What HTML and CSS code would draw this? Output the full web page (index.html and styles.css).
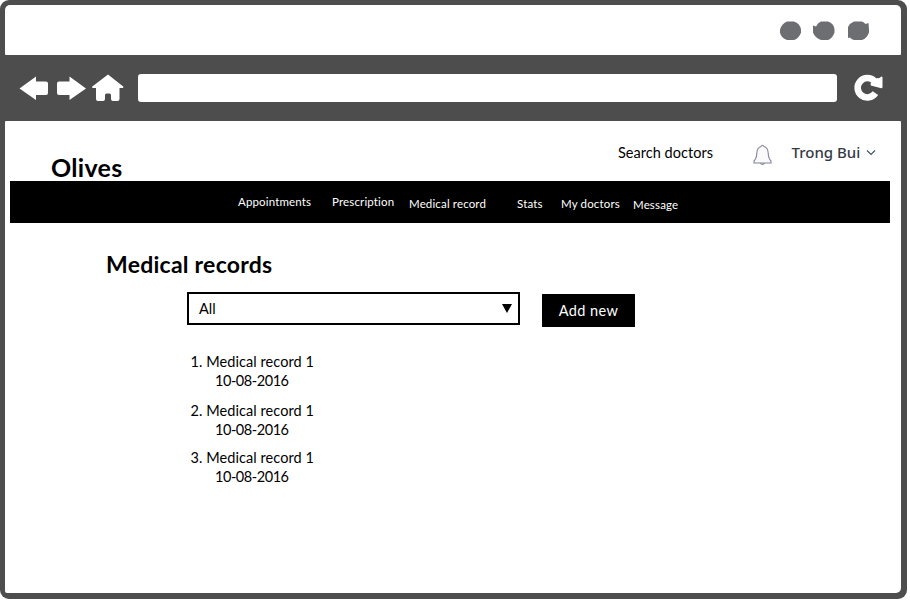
FILE: index.html
```html
<!DOCTYPE html>
<html lang="en">
<head>
<meta charset="utf-8">
<title>Olives - Medical records</title>
<link rel="stylesheet" href="styles.css">
</head>
<body>
<div class="window">
  <div class="titlebar">
    <svg class="dots" width="92" height="22" viewBox="0 0 92 22" fill="#6d6e72">
      <path d="M8 1.500h7q6 2 7 8v3q-2 6-7 7.500H8q-6-2-7-7.500v-3q2-6 7-8z"/>
      <path d="M34 5.500l3 1q2-4 5-5h7q6 2 6.500 8v3q-2 6-6.500 7.500h-7q-6-2-8-7.500z"/>
      <path d="M75 1.500h8q2 .5 3.500 2.500l3-1 .5 6.500v3q-2 6-7 7.500h-8q-3-1-4-2.500l-2 .500V7q2-4 6-5.500z"/>
    </svg>
  </div>
  <div class="toolbar">
    <svg class="arrows" width="106" height="30" viewBox="0 0 106 30" fill="#fff">
      <path d="M.5 14.500L17 2.500v5h10q2 0 2 2v9.500q0 2-2 2H17v5z"/>
      <path d="M67 14.500L50.500 2.500v5H40q-2 0-2 2v9.500q0 2 2 2h10.500v5z"/>
      <path d="M89 .5l15.500 12.300-.5 1.200h-3.500v11q0 2-2 2H94q-2 0-2-2v-4q0-1.500-1.500-1.500h-3q-1.500 0-1.500 1.500v4q0 2-2 2h-5q-2 0-2-2V14h-3.500l-.5-1.200z"/>
    </svg>
    <div class="address"></div>
    <svg class="reload" width="32" height="30" viewBox="0 0 32 30">
      <path d="M22.500 7.200A9.700 9.700 0 1 0 23.400 19.200" fill="none" stroke="#fff" stroke-width="6.600"/>
      <path d="M29.500 2.500q1 0 1 1.200V13q0 1.200-1.200 1.200L18.800 11.500l-.3-2L25 4l2 .200z" fill="#fff"/>
    </svg>
  </div>
  <div class="page">
    <header class="header">
      <div class="brand">Olives</div>
      <div class="search">Search doctors</div>
      <svg class="bell" width="19" height="22" viewBox="0 0 19 22" fill="#fafafc" stroke="#83839a" stroke-width="1.100">
        <path d="M7.200 19q2.300 3 4.600 0M8 2.500q1.500-2.500 3 0 4 1.200 4.200 6.500.2 5.500 2.800 8v2H1v-2Q3.600 14.500 3.800 9 4 3.700 8 2.500z"/>
      </svg>
      <div class="user">Trong Bui</div>
      <svg class="chevron" width="10" height="6" viewBox="0 0 10 6" fill="none" stroke="#43546b" stroke-width="1.200"><path d="M1 .5l4 4 4-4"/></svg>
    </header>
    <nav class="nav">
      <a class="appointments">Appointments</a>
      <a class="prescription">Prescription</a>
      <a class="record">Medical record</a>
      <a class="stats">Stats</a>
      <a class="doctors">My doctors</a>
      <a class="message">Message</a>
    </nav>
    <main>
      <h1>Medical records</h1>
      <div class="controls">
        <div class="select"><span>All</span><svg width="10" height="9" viewBox="0 0 10 9"><path d="M0 0h10L5 9z"/></svg></div>
        <div class="button">Add new</div>
      </div>
      <div class="records">
        <div class="item"><div>1. Medical record 1</div><div class="date">10-08-2016</div></div>
        <div class="item"><div>2. Medical record 1</div><div class="date">10-08-2016</div></div>
        <div class="item"><div>3. Medical record 1</div><div class="date">10-08-2016</div></div>
      </div>
    </main>
  </div>
</div>
</body>
</html>
```
FILE: styles.css
```css
* { box-sizing: border-box; }
body { margin: 0; background: #fff; font-family: Lato, "Liberation Sans", sans-serif; color: #000; }
.window { width: 907px; height: 599px; padding: 5px 6px 6px 5px; background: #4d4d4d; border-radius: 9px; display: flex; flex-direction: column; }
.titlebar { height: 50px; background: #fff; border-radius: 5px 5px 1px 1px; padding: 15px 0 0 774px; }
.dots, .arrows, .reload, .bell, .chevron { display: block; flex: none; }
.toolbar { height: 66px; display: flex; align-items: flex-start; padding: 19px 0 0 14px; }
.address { width: 699px; height: 28px; margin-left: 13px; background: #fff; border-radius: 3px; }
.reload { margin: 0 0 0 15px; }
.page { flex: 1; background: #fff; border-radius: 1px 1px 5px 2px; }
.header { height: 60px; display: flex; align-items: flex-start; white-space: nowrap; }
.brand { width: 567px; padding: 31px 0 0 46px; font-size: 25px; line-height: 30px; font-weight: 700; letter-spacing: 0.3px; }
.search { width: 135px; padding: 22px 0 0 46px; font-size: 14.500px; line-height: 20px; letter-spacing: 0.03px; }
.bell { margin: 23px 0 0 46px; }
.user { width: 73px; margin-left: 19.500px; padding-top: 21px; font-family: "Noto Sans", sans-serif; font-size: 15px; line-height: 20px; color: #333a45; font-weight: 500; }
.chevron { margin: 29px 0 0 1px; }
.nav { width: 880px; height: 42px; margin-left: 5px; padding: 13px 0 0 228px; background: #000; color: #fff; display: grid; grid-template-columns: 94px 77px 108px 44px 72px 60px; font-size: 11.500px; line-height: 16px; letter-spacing: 0.15px; white-space: nowrap; }
.record, .stats, .doctors { padding-top: 2px; }
.message { padding-top: 3px; }
h1 { margin: 0; padding: 26px 0 1px 101px; font-size: 23px; line-height: 30px; letter-spacing: 0.25px; }
.controls { display: flex; padding: 12px 0 0 182px; }
.select { width: 333px; height: 33px; border: 2px solid #000; display: flex; align-items: center; justify-content: space-between; padding: 0 6px 0 10px; font-size: 14.500px; }
.button { width: 93px; height: 33px; margin: 2px 0 0 22px; background: #000; color: #fff; font-size: 14.500px; line-height: 34px; letter-spacing: 0.4px; text-align: center; }
.records { padding: 25px 0 0 185.500px; font-size: 14.500px; line-height: 19px; letter-spacing: 0.07px; }
.item { height: 49px; }
.item + .item { height: 47px; }
.date { padding-left: 24.500px; letter-spacing: -0.45px; }
```
